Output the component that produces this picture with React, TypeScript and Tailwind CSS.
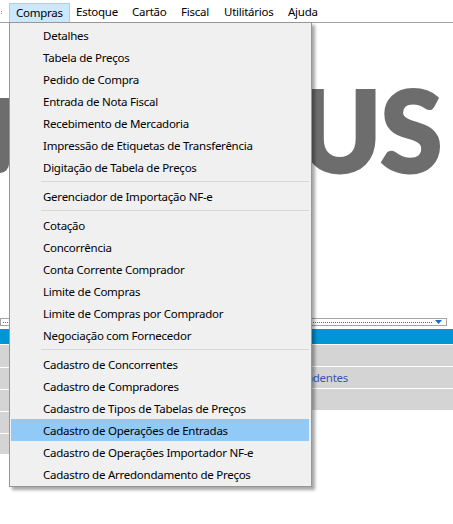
const topItems = ["Compras", "Estoque", "Cartão", "Fiscal", "Utilitários", "Ajuda"];
const topWidths = ["w-[61px]", "w-[56px]", "w-[49px]", "w-[43px]", "w-[64px]", "w-[44px]"];

type Entry = { label: string } | { sep: true };

const menu: Entry[] = [
  { label: "Detalhes" },
  { label: "Tabela de Preços" },
  { label: "Pedido de Compra" },
  { label: "Entrada de Nota Fiscal" },
  { label: "Recebimento de Mercadoria" },
  { label: "Impressão de Etiquetas de Transferência" },
  { label: "Digitação de Tabela de Preços" },
  { sep: true },
  { label: "Gerenciador de Importação NF-e" },
  { sep: true },
  { label: "Cotação" },
  { label: "Concorrência" },
  { label: "Conta Corrente Comprador" },
  { label: "Limite de Compras" },
  { label: "Limite de Compras por Comprador" },
  { label: "Negociação com Fornecedor" },
  { sep: true },
  { label: "Cadastro de Concorrentes" },
  { label: "Cadastro de Compradores" },
  { label: "Cadastro de Tipos de Tabelas de Preços" },
  { label: "Cadastro de Operações de Entradas" },
  { label: "Cadastro de Operações Importador NF-e" },
  { label: "Cadastro de Arredondamento de Preços" },
];

const active = "Cadastro de Operações de Entradas";

function MenuBar() {
  return (
    <div className="relative flex h-[23px] items-stretch border-b border-[#a0a0a0] bg-white pt-[3px]">
      <div className="flex w-[9px] items-center">
        <div className="ml-[1px] flex flex-col gap-[1px]">
          <span className="block h-[1px] w-[1px] bg-[#8a8a8a]" />
          <span className="block h-[1px] w-[1px] bg-[#8a8a8a]" />
        </div>
      </div>
      {topItems.map((t, i) => (
        <div
          key={t}
          className={`${topWidths[i]} flex items-center pb-[1px] pl-[6px] ${
            i === 0 ? "border border-b-0 border-[#99d1ff] bg-[#cce8ff] pl-[5px]" : ""
          }`}
        >
          {t}
        </div>
      ))}
    </div>
  );
}

function Dropdown() {
  return (
    <div className="absolute left-[9px] top-[22px] z-10 w-[303px] border border-[#979797] bg-[#f0f0f0] px-[1px] py-[1px] shadow-[3px_3px_3px_rgba(0,0,0,0.35)]">
      {menu.map((e, i) =>
        "sep" in e ? (
          <div key={i} className="flex h-[7px] items-center pl-[30px] pr-[1px]">
            <div className="h-[1px] w-full bg-[#d7d7d7]" />
          </div>
        ) : (
          <div
            key={i}
            className={`flex h-[22px] items-center pl-[32px] pt-[1px] ${
              e.label === active ? "mr-[1px] bg-[#91c9f7]" : ""
            }`}
          >
            {e.label}
          </div>
        )
      )}
    </div>
  );
}

export default function App() {
  return (
    <div
      className="relative h-[524px] w-[453px] overflow-hidden bg-white text-[11.5px] tracking-[-0.25px] text-black"
      style={{ fontFamily: '"Noto Sans", "Open Sans", sans-serif' }}
    >
      <MenuBar />
      <div className="relative h-[295px]">
        {/* logo behind the menu */}
        <div className="absolute left-0 top-[75px] h-[75px] w-[9px] rounded-br-[9px] bg-[#6d6d6d]" />
        <div
          className="absolute left-[298px] top-[50px] text-[112px] font-black leading-none tracking-[-1px] text-[#6d6d6d] [-webkit-text-stroke:3px_#6d6d6d]"
          style={{ fontFamily: "Lato, sans-serif" }}
        >
          US
        </div>
      </div>
      <div className="flex h-[8px] w-[447px] items-center border border-[#a5a5a5] bg-white px-[2px]">
        <div className="h-0 flex-1 border-t border-dotted border-[#3d6fb5]" />
        <svg width="9" height="6" viewBox="0 0 9 6" className="ml-[2px] mr-[1px]">
          <path d="M1 1 H8 L4.5 5 Z" fill="#1c6ac7" />
        </svg>
      </div>
      <div className="mt-[3px] h-[15px] bg-[#0096d6]" />
      <div className="flex">
        <div className="flex w-[300px] flex-col gap-[1px] pt-[1px]">
          <div className="h-[22px] bg-[#d4d4d4]" />
          <div className="h-[21px] bg-[#d4d4d4]" />
          <div className="h-[21px] bg-[#d4d4d4]" />
          <div className="h-[21px] bg-[#d4d4d4]" />
          <div className="h-[20px] bg-[#d4d4d4]" />
        </div>
        <div className="flex flex-1 flex-col gap-[1px] pt-[1px]">
          <div className="h-[21px] bg-[#d4d4d4]" />
          <div className="flex h-[21px] items-center bg-[#d4d4d4] text-[#3556b3]">
            <span className="-ml-[7px]">Pendentes</span>
          </div>
          <div className="h-[21px] bg-[#d4d4d4]" />
        </div>
      </div>
      <Dropdown />
    </div>
  );
}
